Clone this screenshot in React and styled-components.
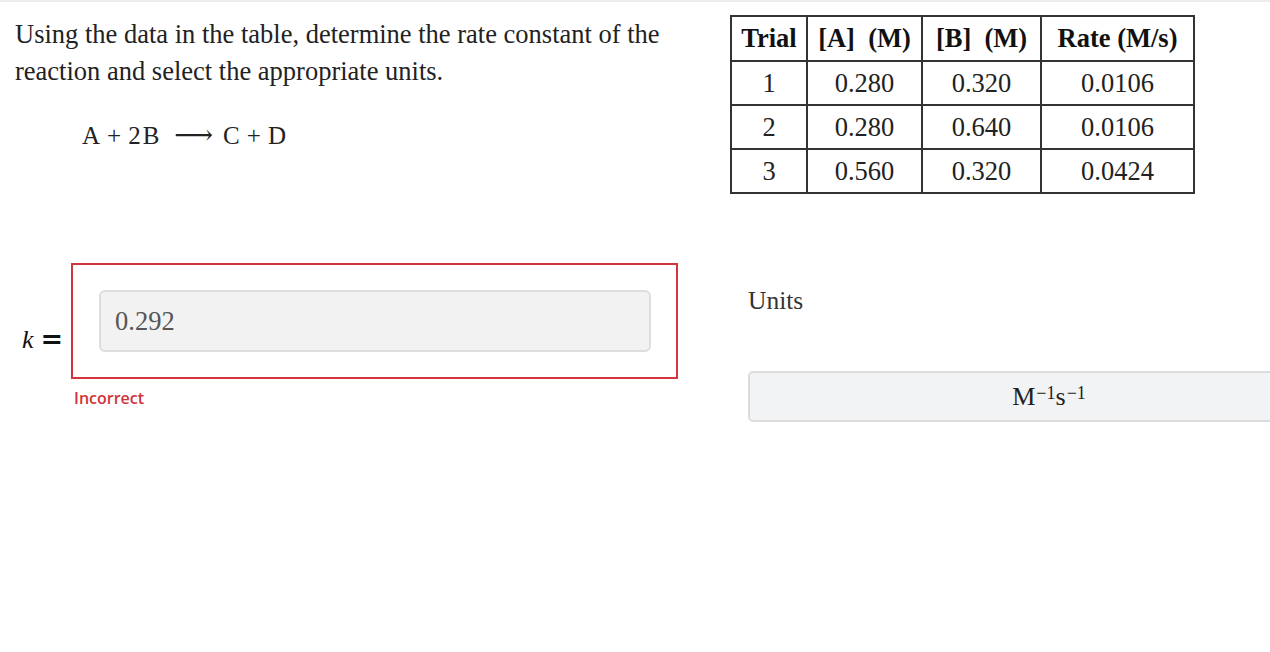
import React from 'react';
import styled, { createGlobalStyle } from 'styled-components';

const Global = createGlobalStyle`
	html, body {
		margin: 0;
		padding: 0;
		background: #ffffff;
		overflow: hidden;
	}
	body {
		font-family: "Liberation Serif", "Times New Roman", serif;
		color: #222222;
	}
`;

const rows = [
	['1', '0.280', '0.320', '0.0106'],
	['2', '0.280', '0.640', '0.0106'],
	['3', '0.560', '0.320', '0.0424'],
];

const App = () => {
	return (
		<>
			<Global />
			<Page>
				<TopRow>
					<Question>
						<Prompt>
							Using the data in the table, determine the rate constant of the
							<br />
							reaction and select the appropriate units.
						</Prompt>
						<Equation>
							A<Op>+</Op>2<Sym>B</Sym>
							<Arrow>⟶</Arrow>C<Op>+</Op>D
						</Equation>
					</Question>
					<DataTable>
						<colgroup>
							<col style={{ width: 76 }} />
							<col style={{ width: 115 }} />
							<col style={{ width: 119 }} />
							<col style={{ width: 153 }} />
						</colgroup>
						<thead>
							<tr>
								<Th>Trial</Th>
								<Th>[A]&nbsp; (M)</Th>
								<Th>[B]&nbsp; (M)</Th>
								<Th>Rate (M/s)</Th>
							</tr>
						</thead>
						<tbody>
							{rows.map((r) => (
								<tr key={r[0]}>
									{r.map((v, i) => (
										<Td key={i}>{v}</Td>
									))}
								</tr>
							))}
						</tbody>
					</DataTable>
				</TopRow>
				<BottomRow>
					<Answer>
						<AnswerLine>
							<KLabel>
								<i>k</i>
								<Equals>=</Equals>
							</KLabel>
							<ErrorBox>
								<ValueField>0.292</ValueField>
							</ErrorBox>
						</AnswerLine>
						<Feedback>Incorrect</Feedback>
					</Answer>
					<Units>
						<UnitsLabel>Units</UnitsLabel>
						<UnitSelect>
							M<sup>−1</sup>s<sup>−1</sup>
						</UnitSelect>
					</Units>
				</BottomRow>
			</Page>
		</>
	);
};

export default App;

const Page = styled.div`
	width: 1270px;
	height: 652px;
	border-top: 2px solid #ececec;
	box-sizing: border-box;
	padding-top: 13px;
`;
const TopRow = styled.div`
	display: grid;
	grid-template-columns: 730px auto;
	align-items: start;
`;
const Question = styled.div`
	padding-left: 15px;
	padding-top: 1px;
`;
const Prompt = styled.p`
	margin: 0;
	font-size: 26.5px;
	line-height: 37px;
	color: #222222;
`;
const Equation = styled.div`
	margin-top: 26px;
	padding-left: 67px;
	display: flex;
	align-items: baseline;
	font-size: 25px;
	line-height: 37px;
	color: #222222;
`;
const Op = styled.span`
	margin: 0 7px;
`;
const Sym = styled.span`
	margin-left: 2px;
`;
const Arrow = styled.span`
	font-family: "DejaVu Serif", serif;
	font-size: 27px;
	margin: 0 10px 0 15px;
`;
const DataTable = styled.table`
	border-collapse: collapse;
	table-layout: fixed;
	width: 463px;
	font-size: 26.5px;
	color: #222222;
	border: 2px solid #333333;
`;
const Th = styled.th`
	border: 2px solid #333333;
	height: 43px;
	padding: 0;
	font-weight: 700;
	text-align: center;
	white-space: nowrap;
	color: #111111;
`;
const Td = styled.td`
	border: 2px solid #333333;
	height: 42px;
	padding: 0;
	text-align: center;
`;
const BottomRow = styled.div`
	display: grid;
	grid-template-columns: 730px auto;
	margin-top: 69px;
	align-items: start;
`;
const Answer = styled.div`
	display: flex;
	flex-direction: column;
`;
const AnswerLine = styled.div`
	display: flex;
	align-items: flex-start;
`;
const KLabel = styled.div`
	width: 49px;
	padding-left: 22px;
	margin-top: 61px;
	display: flex;
	align-items: baseline;
	font-size: 26px;
	line-height: 30px;
	color: #111111;
	white-space: nowrap;
`;
const Equals = styled.span`
	font-family: "DejaVu Sans", sans-serif;
	font-size: 27px;
	font-weight: 700;
	margin-left: 7px;
`;
const ErrorBox = styled.div`
	width: 607px;
	height: 116px;
	box-sizing: border-box;
	border: 2px solid #d2363c;
	padding: 25px 25px 0 26px;
`;
const ValueField = styled.div`
	height: 62px;
	box-sizing: border-box;
	border: 2px solid #dedede;
	border-radius: 6px;
	background: #f2f2f2;
	padding-left: 14px;
	display: flex;
	align-items: center;
	font-size: 26.5px;
	color: #555555;
`;
const Feedback = styled.div`
	margin: 8px 0 0 74px;
	font-family: "Open Sans", "Liberation Sans", sans-serif;
	font-weight: 600;
	font-size: 16px;
	color: #d0343a;
`;
const Units = styled.div`
	padding-left: 18px;
	padding-top: 23px;
`;
const UnitsLabel = styled.div`
	font-size: 25.5px;
	color: #333333;
`;
const UnitSelect = styled.div`
	margin-top: 55px;
	width: 602px;
	height: 51px;
	box-sizing: border-box;
	border: 2px solid #dcdcdc;
	border-radius: 5px;
	background: #f2f3f5;
	display: flex;
	align-items: center;
	justify-content: center;
	font-size: 26px;
	color: #222222;
	sup {
		font-size: 18px;
		line-height: 0;
		position: relative;
		top: -4px;
		margin-left: 1px;
	}
`;
